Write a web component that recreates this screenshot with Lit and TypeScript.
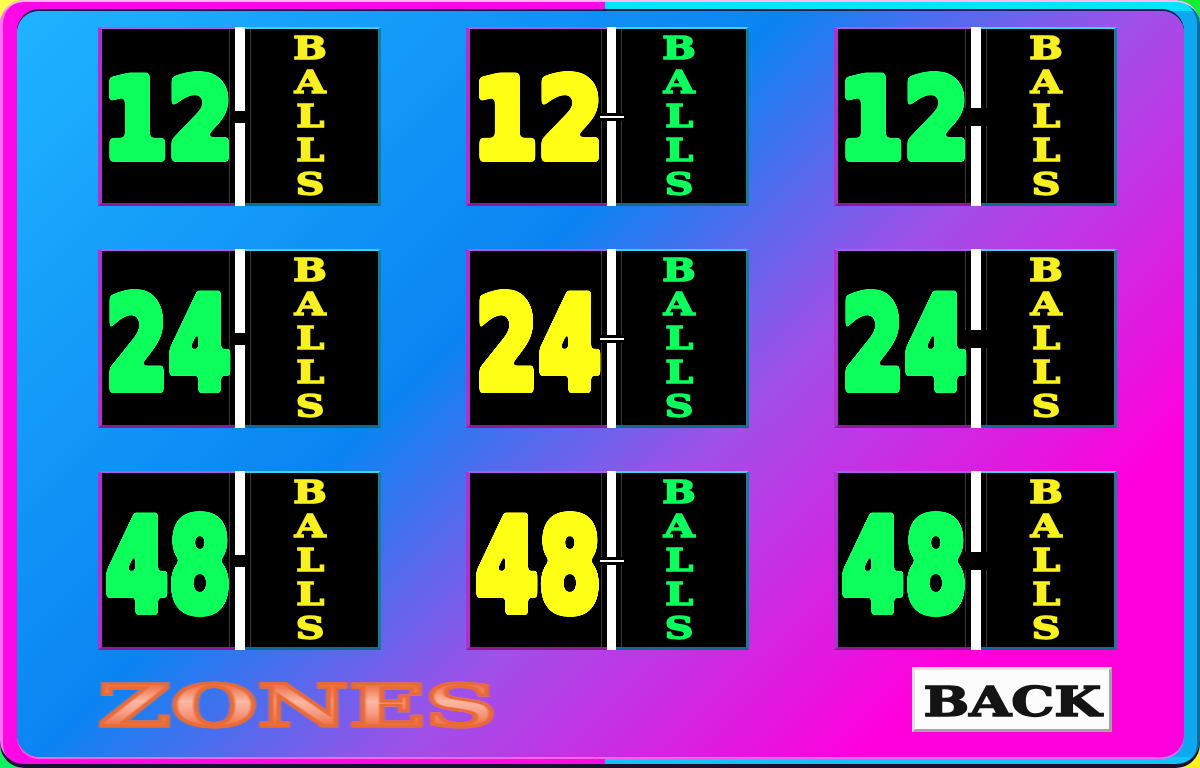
import { LitElement, html, css } from "lit";
import { customElement } from "lit/decorators.js";

const ROWS = ["12", "24", "48"];
const LETTERS = ["B", "A", "L", "L", "S"];

@customElement("app-root")
export class AppRoot extends LitElement {
  static styles = css`
    :host { display: block; width: 100%; height: 100vh; overflow: hidden; }
    .defs { position: absolute; width: 0; height: 0; }
    .frame {
      position: relative; box-sizing: border-box; width: 100%; height: 100%;
      background:
        linear-gradient(135deg, #ffff50 0 50%, transparent 50%) 0 0 / 26px 26px no-repeat,
        linear-gradient(225deg, #10f030 0 50%, transparent 50%) 100% 0 / 26px 26px no-repeat,
        linear-gradient(45deg, #10f060 0 50%, transparent 50%) 0 100% / 26px 26px no-repeat,
        linear-gradient(315deg, #fff020 0 50%, transparent 50%) 100% 100% / 26px 26px no-repeat,
        #101020;
    }
    .ring {
      box-sizing: border-box; width: 100%; height: 100%;
      padding: 11px 16px 11px 17px;
      border-radius: 24px;
      background:
        linear-gradient(#00e4ff, #00e4ff) right top / 49.6% 11px no-repeat,
        linear-gradient(#10c4fa, #10c4fa) right bottom / 49.6% 11px no-repeat,
        linear-gradient(90deg, #ff08e6 50.4%, #0ea8f0 50.4%);
      box-shadow:
        inset 0 3px 0 -1px #ffb8f0,
        inset 0 -4px 0 #1a1030,
        inset 3px 0 0 #ff70f0,
        inset -3px 0 0 #0a6c9c;
    }
    .panel {
      box-sizing: border-box; width: 100%; height: 100%;
      padding: 16px 66px 0 81px;
      border-radius: 22px;
      background: linear-gradient(135deg, #1fb4ff 0%, #0a84f2 40%, #a050e8 59%, #ff00dc 83%, #ff00dc 100%);
      box-shadow: 0 -2px 0 #141a50, 0 2px 0 #ff60f0;
    }
    .grid {
      display: grid;
      grid-template-columns: repeat(3, 283px);
      grid-auto-rows: 179px;
      column-gap: 85px;
      row-gap: 43px;
    }
    .card {
      display: grid;
      grid-template-columns: 137px 10px 1fr;
      background: #000;
    }
    .card.mid { grid-template-columns: 141px 9px 1fr; }
    .half { box-sizing: border-box; min-width: 0; display: flex; align-items: center; justify-content: center; }
    .left {
      border-left: 4px solid #b030d0;
      border-top: 2px solid #b05ae8;
      border-bottom: 3px solid #8a1c9a;
      box-shadow: inset -5px 0 0 #000, inset -6px 0 0 #3a3a3a;
    }
    .right {
      border-right: 3px solid #147e98;
      border-top: 2px solid #40d0f0;
      border-bottom: 3px solid #126a8c;
      box-shadow: inset 5px 0 0 #000, inset 6px 0 0 #3a3a3a;
    }
    .num {
      display: inline-block;
      padding-top: 14px;
      font: 700 126px/1 "DejaVu Sans", sans-serif;
      letter-spacing: 1px;
      -webkit-text-stroke: 10px currentColor;
      transform: scaleX(0.71);
      filter: url(#soft);
    }
    .num.n12 {
      padding-top: 8px;
      font-size: 108px;
      transform: scaleX(0.86);
    }
    .green { color: #0cff5c; }
    .yellow { color: #ffff14; }
    .balls {
      display: flex; flex-direction: column; align-items: center;
      margin-right: 3px;
      transform: scaleX(1.28);
      filter: blur(0.5px);
      font: 700 31px/34px "DejaVu Serif", serif;
      -webkit-text-stroke: 1.5px currentColor;
    }
    .letter-yellow { color: #f8f020; }
    .divider { position: relative; background: #fff; }
    .notch {
      position: absolute; left: 50%; top: 50%;
      width: 20px; height: 12px;
      transform: translate(-50%, -50%);
      background: #000;
    }
    .notch.wide { width: 22px; height: 18px; }
    .notch.eq {
      width: 24px; height: 8px;
      background: linear-gradient(#000 0 3px, #fff 3px 5px, #000 5px);
    }
    .foot {
      display: flex; justify-content: space-between; align-items: flex-start;
      padding: 17px 6px 0 0;
    }
    .zones {
      display: inline-block;
      margin-top: 10px;
      font: 700 58px/1 "DejaVu Serif", serif;
      transform: scaleX(1.72);
      transform-origin: left center;
      background: linear-gradient(#ee7a55 18%, #fdb8a4 42%, #f79c86 62%, #ee7040 84%);
      -webkit-background-clip: text;
      background-clip: text;
      color: transparent;
      -webkit-text-stroke: 3px #ea6a34;
      filter: blur(0.5px);
    }
    .back {
      box-sizing: border-box; width: 200px; height: 65px;
      display: flex; align-items: center; justify-content: center;
      background: #fcfcfc;
      border: 3px solid; border-color: #e0e0e0 #a8a0a8 #a8a0a8 #e0e0e0;
      padding: 5px 0 0;
    }
    .back span {
      display: inline-block;
      font: 700 41px/1 "DejaVu Serif", serif;
      color: #141414;
      -webkit-text-stroke: 1.5px #141414;
      transform: scaleX(1.32);
      filter: blur(0.4px);
    }
  `;

  private card(num: string, col: number) {
    const mid = col === 1;
    const notch = mid ? "notch eq" : col === 2 ? "notch wide" : "notch";
    return html`
      <div class="card ${mid ? "mid" : ""}">
        <div class="half left"><span class="num n${num} ${mid ? "yellow" : "green"}">${num}</span></div>
        <div class="divider"><div class=${notch}></div></div>
        <div class="half right">
          <div class="balls ${mid ? "green" : "letter-yellow"}">
            ${LETTERS.map((l) => html`<span>${l}</span>`)}
          </div>
        </div>
      </div>
    `;
  }

  render() {
    return html`
      <svg class="defs" aria-hidden="true">
        <filter id="soft" x="-10%" y="-10%" width="120%" height="120%">
          <feGaussianBlur stdDeviation="2.6" />
          <feComponentTransfer>
            <feFuncA type="linear" slope="10" intercept="-4.5" />
          </feComponentTransfer>
          <feGaussianBlur stdDeviation="0.7" />
        </filter>
      </svg>
      <div class="frame">
        <div class="ring">
          <div class="panel">
            <div class="grid">
              ${ROWS.map((n) => [0, 1, 2].map((c) => this.card(n, c)))}
            </div>
            <div class="foot">
              <span class="zones">ZONES</span>
              <button class="back"><span>BACK</span></button>
            </div>
          </div>
        </div>
      </div>
    `;
  }
}
